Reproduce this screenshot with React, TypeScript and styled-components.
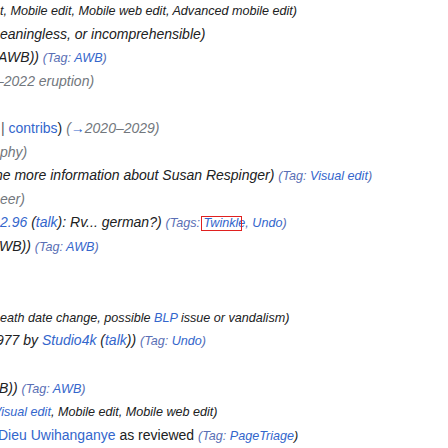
import React from "react";
import styled, { createGlobalStyle } from "styled-components";

const Global = createGlobalStyle`
  html, body { margin: 0; padding: 0; background: #ffffff; }
  body {
    font-family: "Liberation Sans", Arial, sans-serif;
    color: #202122;
    overflow: hidden;
  }
`;

const List = styled.ul`
  list-style: none;
  margin: -1px 0 0;
  padding: 0;
  width: 448px;
  height: 449px;
  overflow: hidden;
`;

const Row = styled.li<{ $shift?: number }>`
  height: 23.6px;
  line-height: 23.6px;
  white-space: nowrap;
  font-size: 14px;
  margin-left: ${(p) => p.$shift ?? 0}px;
`;

const Comment = styled.span`
  font-style: italic;
  color: #202122;
`;

const Auto = styled.span`
  font-style: italic;
  color: #72777d;
`;

const Plain = styled.span`
  font-style: normal;
  color: #202122;
`;

const Sep = styled.span`
  color: #54595d;
`;

const Link = styled.a`
  color: #3366cc;
  text-decoration: none;
  cursor: pointer;
`;

const Tags = styled.span`
  font-style: italic;
  font-size: 12.6px;
  color: #202122;
`;

const TagLabel = styled.span`
  color: #5a6fb5;
`;

const Marked = styled.span`
  position: relative;
  &::after {
    content: "";
    position: absolute;
    left: -3px;
    right: 3px;
    top: 0;
    bottom: -1px;
    border: 1px solid #e0201f;
    pointer-events: none;
  }
`;

export default function App() {
  return (
    <>
      <Global />
      <List>
        <Row>
          <Tags>t, Mobile edit, Mobile web edit, Advanced mobile edit)</Tags>
        </Row>
        <Row>
          <Comment>eaningless, or incomprehensible)</Comment>
        </Row>
        <Row $shift={-2}>
          <Comment>AWB))</Comment>{" "}
          <Tags>
            <TagLabel>(Tag: </TagLabel>
            <Link>AWB</Link>
            <TagLabel>)</TagLabel>
          </Tags>
        </Row>
        <Row $shift={-4}>
          <Auto>–2022 eruption)</Auto>
        </Row>
        <Row />
        <Row $shift={1}>
          <Sep>| </Sep>
          <Link>contribs</Link>
          <Plain>)</Plain>{" "}
          <Auto>
            (<Link>→</Link>2020–2029)
          </Auto>
        </Row>
        <Row>
          <Auto>phy)</Auto>
        </Row>
        <Row $shift={-5}>
          <Comment>ne more information about Susan Respinger)</Comment>{" "}
          <Tags>
            <TagLabel>(Tag: </TagLabel>
            <Link>Visual edit</Link>
            <TagLabel>)</TagLabel>
          </Tags>
        </Row>
        <Row>
          <Auto>eer)</Auto>
        </Row>
        <Row>
          <Comment>
            <Link>2.96</Link> (<Link>talk</Link>): Rv... german?)
          </Comment>{" "}
          <Tags>
            <TagLabel>(Tags: </TagLabel>
            <Marked>
              <Link>Twinkle</Link>
            </Marked>
            <TagLabel>, </TagLabel>
            <Link>Undo</Link>
            <TagLabel>)</TagLabel>
          </Tags>
        </Row>
        <Row $shift={-1}>
          <Comment>WB))</Comment>{" "}
          <Tags>
            <TagLabel>(Tag: </TagLabel>
            <Link>AWB</Link>
            <TagLabel>)</TagLabel>
          </Tags>
        </Row>
        <Row />
        <Row />
        <Row>
          <Tags>
            eath date change, possible <Link>BLP</Link> issue or vandalism)
          </Tags>
        </Row>
        <Row $shift={-4}>
          <Comment>
            977 by <Link>Studio4k</Link> (<Link>talk</Link>))
          </Comment>{" "}
          <Tags>
            <TagLabel>(Tag: </TagLabel>
            <Link>Undo</Link>
            <TagLabel>)</TagLabel>
          </Tags>
        </Row>
        <Row />
        <Row $shift={-1}>
          <Comment>B))</Comment>{" "}
          <Tags>
            <TagLabel>(Tag: </TagLabel>
            <Link>AWB</Link>
            <TagLabel>)</TagLabel>
          </Tags>
        </Row>
        <Row $shift={-7}>
          <Tags>
            <Link>Visual edit</Link>, Mobile edit, Mobile web edit)
          </Tags>
        </Row>
        <Row $shift={-2}>
          <Link>Dieu Uwihanganye</Link>
          <Plain> as reviewed</Plain>{" "}
          <Tags>
            <TagLabel>(Tag: </TagLabel>
            <Link>PageTriage</Link>
            <Comment>)</Comment>
          </Tags>
        </Row>
      </List>
    </>
  );
}
